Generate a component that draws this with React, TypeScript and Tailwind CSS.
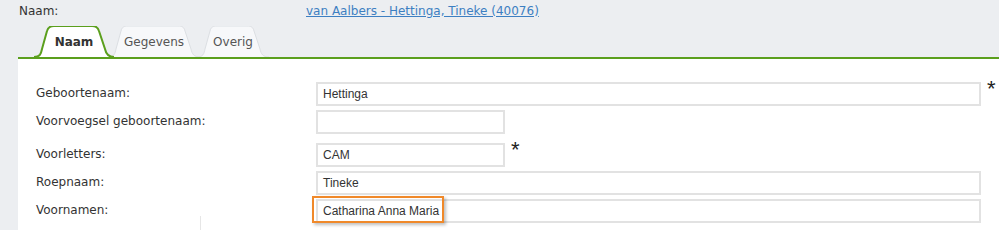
import React from 'react';

const labelFont = { fontFamily: '"DejaVu Sans", Verdana, sans-serif' };
const inputFont = { fontFamily: '"Liberation Sans", Arial, sans-serif' };

function Tab({ label, active, width, className }: { label: string; active?: boolean; width: number; className?: string }) {
  const h = 31;
  const w = width;
  const d = `M0 ${h} C6 ${h} 7 ${h - 3} 8 ${h - 8} L13 5 C14 1 16 0 20 0 L${w - 22} 0 C${w - 18} 0 ${w - 16} 1 ${w - 15} 5 L${w - 9} ${h - 8} C${w - 8} ${h - 3} ${w - 6} ${h} ${w} ${h}`;
  return (
    <div className={`relative flex items-center justify-center shrink-0 ${className ?? ''}`} style={{ width: w, height: h }}>
      <svg className="absolute inset-0" width={w} height={h + 1} viewBox={`0 0 ${w} ${h + 1}`}>
        <path
          d={d}
          fill={active ? '#ffffff' : '#f7f8fa'}
          stroke={active ? '#5b9f1d' : '#dcdfe3'}
          strokeWidth={active ? 2 : 1}
        />
      </svg>
      <span
        className={`relative text-[12px] pt-[1px] ${active ? 'font-bold text-[#333]' : 'text-[#555]'}`}
        style={labelFont}
      >
        {label}
      </span>
    </div>
  );
}

function Row({
  label,
  value,
  short,
  required,
  focus,
  mt,
}: {
  label: string;
  value?: string;
  short?: boolean;
  required?: boolean;
  focus?: boolean;
  mt: string;
}) {
  return (
    <div className={`flex items-center h-[24px] ${mt}`}>
      <div className="w-[280px] text-[12px] text-[#333] pb-[2px]" style={labelFont}>
        {label}
      </div>
      <div className="relative flex items-start h-full">
        <div
          className={`h-full border-2 border-[#e2e2e2] bg-white flex items-center px-[5px] text-[12px] text-[#333] ${
            short ? 'w-[189px]' : 'w-[665px]'
          }`}
          style={inputFont}
        >
          {value}
        </div>
        {focus && (
          <div className="absolute left-[-4px] top-[-3px] w-[132px] h-[27px] border-2 border-[#f0892a] shadow-[2px_2px_3px_rgba(0,0,0,0.25)]" />
        )}
        {required && (
          <span className="ml-[6px] mt-[-4px] text-[22px] leading-none text-[#222]" style={inputFont}>
            *
          </span>
        )}
      </div>
    </div>
  );
}

export default function App() {
  return (
    <div className="w-[999px] h-[243px] bg-white overflow-hidden">
      <div className="bg-[#eceef1] h-[230px] flex flex-col">
        <div className="flex h-[19px] items-center pl-[19px] pt-[2px] text-[12px]" style={labelFont}>
          <span className="w-[287px] text-[#333]">Naam:</span>
          <a href="#" className="text-[#3d7fc2] underline text-[12px]">
            van Aalbers - Hettinga, Tineke (40076)
          </a>
        </div>
        <div className="flex items-end h-[38px] pl-[34px]">
          <Tab label="Naam" active width={80} className="z-10" />
          <Tab label="Gegevens" width={92} className="-ml-[6px]" />
          <Tab label="Overig" width={72} className="-ml-[3px]" />
        </div>
        <div className="flex-1 ml-[18px] bg-white border-t-2 border-[#5b9f1d] pl-[18px] relative">
          <Row label="Geboortenaam:" value="Hettinga" required mt="mt-[23px]" />
          <Row label="Voorvoegsel geboortenaam:" short mt="mt-[4px]" />
          <Row label="Voorletters:" value="CAM" short required mt="mt-[9px]" />
          <Row label="Roepnaam:" value="Tineke" mt="mt-[4px]" />
          <Row label="Voornamen:" value="Catharina Anna Maria" focus mt="mt-[4px]" />
          <div className="absolute left-[182px] top-[157px] w-[1px] h-[14px] bg-[#e6e6e6]" />
        </div>
      </div>
    </div>
  );
}
